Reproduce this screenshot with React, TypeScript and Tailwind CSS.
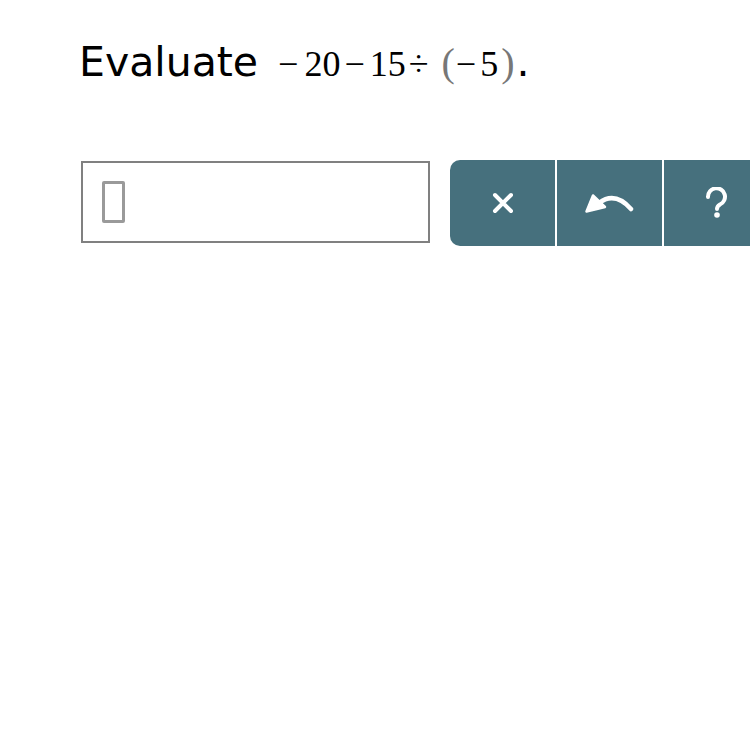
import React from 'react';

const Mathish: React.FC = () => (
    <span className="inline-flex items-baseline text-[36px] leading-none" style={{ fontFamily: '"Liberation Serif", serif' }}>
        <span>−</span>
        <span className="ml-[6px]">20</span>
        <span className="ml-[4px]">−</span>
        <span className="ml-[5px]">15</span>
        <span className="ml-[3px]">÷</span>
        <span className="ml-[13px] text-[40px] text-[#777777]">(</span>
        <span className="ml-[1px]">−</span>
        <span className="ml-[4px]">5</span>
        <span className="ml-[3px] text-[40px] text-[#777777]">)</span>
    </span>
);

const ClearIcon = () => (
    <svg width="22" height="22" viewBox="0 0 22 22" fill="none">
        <path d="M3 3 L19 19 M19 3 L3 19" stroke="white" strokeWidth="4" strokeLinecap="round" />
    </svg>
);

const UndoIcon = () => (
    <svg width="50" height="22" viewBox="0 0 50 22" fill="none">
        <path d="M14 11 Q30 -1 46 17" stroke="white" strokeWidth="4.5" strokeLinecap="round" />
        <path d="M1.5 19.5 L8 3.5 L20 15 Z" fill="white" stroke="white" strokeWidth="2.5" strokeLinejoin="round" />
    </svg>
);

const HelpIcon = () => (
    <svg width="26" height="32" viewBox="0 0 26 32" fill="none">
        <path d="M4 10 A8.5 8.5 0 1 1 16 17.5 C13.5 19 13 20 13 22" stroke="white" strokeWidth="4" strokeLinecap="round" />
        <circle cx="13" cy="28" r="2.8" fill="white" />
    </svg>
);

export default function App() {
    return (
        <div className="w-[750px] h-[750px] overflow-hidden bg-white">
            <div className="pl-[79px] pt-[42px] h-[92px]">
                <div className="flex items-baseline text-black">
                    <span className="text-[41px] leading-none" style={{ fontFamily: '"DejaVu Sans", sans-serif' }}>
                        Evaluate
                    </span>
                    <span className="ml-[20px]">
                        <Mathish />
                    </span>
                    <span className="text-[41px] leading-none ml-[2px]" style={{ fontFamily: '"DejaVu Sans", sans-serif' }}>
                        .
                    </span>
                </div>
            </div>
            <div className="flex items-start pl-[81px] mt-[68px] w-[800px]">
                <div className="w-[349px] h-[82px] mt-[1px] border-2 border-[#808080] bg-white flex items-center pl-[19px] shrink-0">
                    <div className="w-[23px] h-[42px] border-[3px] border-[#9a9a9a] rounded-[2px]" />
                </div>
                <div className="flex ml-[20px] h-[86px] shrink-0 rounded-l-[10px] overflow-hidden">
                    <button className="w-[105px] bg-[#46707d] flex items-center justify-center">
                        <ClearIcon />
                    </button>
                    <button className="w-[105px] ml-[2px] bg-[#46707d] flex items-center justify-center">
                        <UndoIcon />
                    </button>
                    <button className="w-[105px] ml-[2px] bg-[#46707d] flex items-center justify-center">
                        <HelpIcon />
                    </button>
                </div>
            </div>
        </div>
    );
}
